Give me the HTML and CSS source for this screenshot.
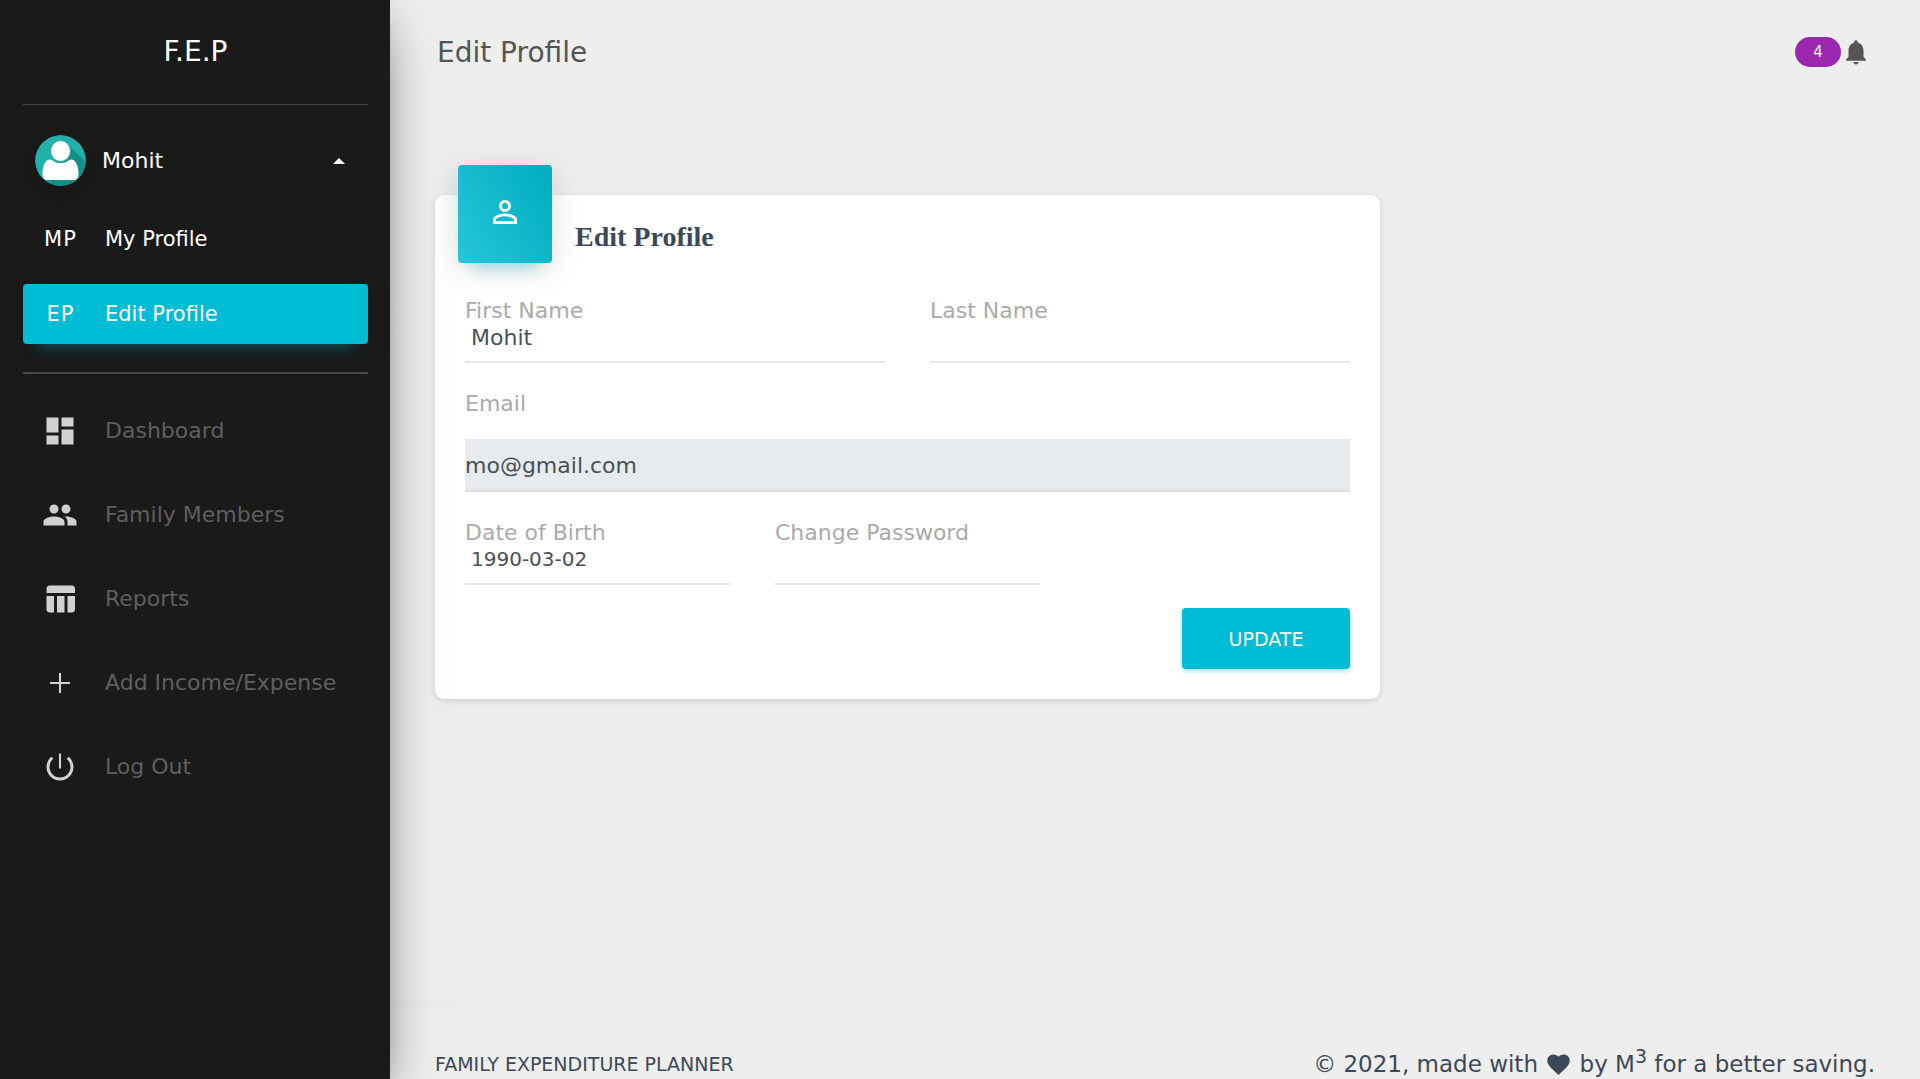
FILE: index.html
```html
<!DOCTYPE html>
<html lang="en">
<head>
<meta charset="utf-8">
<meta name="viewport" content="width=device-width, initial-scale=1">
<title>Edit Profile</title>
<link rel="stylesheet" href="styles.css">
</head>
<body>
<div class="wrapper">
  <aside class="sidebar">
    <a class="logo" href="#">F.E.P</a>
    <div class="user">
      <a class="user-toggle" href="#">
        <svg class="avatar" viewBox="0 0 51 51" aria-hidden="true">
          <defs><clipPath id="disc"><circle cx="25.500" cy="25.500" r="25.500"/></clipPath></defs>
          <g clip-path="url(#disc)">
            <path fill="#20b2aa" d="M0 0h51v51H0z"/>
            <path fill="#158f88" d="M33 9l18 18v24H13l-4-7z"/>
            <path fill="#fff" d="M15 24.500c2.500 0 3.500 3.500 10.500 3.500s8-3.500 10.500-3.500c5 0 7.500 7 7.500 14.500 0 4-2 6-5 6h-26c-3 0-5-2-5-6 0-7.500 2.500-14.500 7.500-14.500z"/>
            <ellipse cx="25.500" cy="16" rx="10" ry="10.500" fill="#fff" stroke="#20a8a0" stroke-width="1"/>
          </g>
        </svg>
        <span>Mohit</span>
        <span class="caret"></span>
      </a>
      <a class="sub-link" href="#"><span class="mini">MP</span><span>My Profile</span></a>
      <a class="sub-link active" href="#"><span class="mini">EP</span><span>Edit Profile</span></a>
    </div>
    <nav class="menu">
      <a href="#"><svg viewBox="0 0 24 24"><path d="M3 13h8V3H3v10zm0 8h8v-6H3v6zm10 0h8V11h-8v10zm0-18v6h8V3h-8z"/></svg>Dashboard</a>
      <a href="#"><svg viewBox="0 0 24 24"><path d="M16 11c1.660 0 2.990-1.340 2.990-3S17.660 5 16 5c-1.660 0-3 1.340-3 3s1.340 3 3 3zm-8 0c1.660 0 2.990-1.340 2.990-3S9.660 5 8 5C6.340 5 5 6.340 5 8s1.340 3 3 3zm0 2c-2.330 0-7 1.170-7 3.500V19h14v-2.500c0-2.330-4.670-3.500-7-3.500zm8 0c-.29 0-.62.02-.97.05 1.160.84 1.970 1.970 1.970 3.450V19h6v-2.500c0-2.330-4.670-3.500-7-3.500z"/></svg>Family Members</a>
      <a href="#"><svg viewBox="0 0 24 24"><path d="M10 10.020h5V21h-5V10.020zM17 21h3c1.100 0 2-.9 2-2v-9h-5v11zm3-18H5c-1.100 0-2 .9-2 2v3h19V5c0-1.100-.9-2-2-2zM3 19c0 1.100.9 2 2 2h3V10H3v9z"/></svg>Reports</a>
      <a href="#"><svg viewBox="0 0 24 24"><path d="M11.300 5.300h1.400v6h6v1.400h-6v6h-1.400v-6h-6v-1.400h6z"/></svg>Add Income/Expense</a>
      <a href="#"><svg viewBox="0 0 24 24"><path d="M12.700 3h-1.400v10h1.400V3zm5.130 2.170l-1.420 1.420C17.990 7.860 19 9.810 19 12c0 3.870-3.130 7-7 7s-7-3.130-7-7c0-2.190 1.010-4.140 2.580-5.420L6.170 5.170C4.230 6.820 3 9.260 3 12c0 4.970 4.030 9 9 9s9-4.030 9-9c0-2.740-1.230-5.180-3.170-6.830z"/></svg>Log Out</a>
    </nav>
  </aside>

  <main class="main">
    <header class="topbar">
      <h1>Edit Profile</h1>
      <a class="alerts" href="#" aria-label="Notifications">
        <span class="badge">4</span>
        <svg viewBox="0 0 24 24"><path d="M12 22c1.100 0 2-.9 2-2h-4c0 1.100.89 2 2 2zm6-6v-5c0-3.070-1.640-5.640-4.500-6.320V4c0-.83-.67-1.500-1.500-1.500s-1.500.67-1.500 1.500v.68C7.630 5.360 6 7.920 6 11v5l-2 2v1h16v-1l-2-2z"/></svg>
      </a>
    </header>

    <div class="content">
      <section class="card">
        <div class="card-head">
          <div class="tile"><svg viewBox="0 0 24 24"><path d="M12 5.900c1.160 0 2.100.94 2.100 2.100s-.94 2.100-2.100 2.100S9.900 9.160 9.900 8s.94-2.100 2.100-2.100m0 9c2.970 0 6.100 1.460 6.100 2.100v1.100H5.900V17c0-.64 3.130-2.100 6.100-2.100M12 4C9.790 4 8 5.790 8 8s1.790 4 4 4 4-1.790 4-4-1.790-4-4-4zm0 9c-2.670 0-8 1.340-8 4v3h16v-3c0-2.660-5.330-4-8-4z"/></svg></div>
          <h2>Edit Profile</h2>
        </div>
        <form class="form">
          <div class="row two">
            <div class="field"><label for="first">First Name</label><input id="first" type="text" value="Mohit"></div>
            <div class="field"><label for="last">Last Name</label><input id="last" type="text"></div>
          </div>
          <div class="row">
            <div class="field filled"><label for="email">Email</label><input id="email" type="email" value="mo@gmail.com" readonly></div>
          </div>
          <div class="row three">
            <div class="field date"><label for="dob">Date of Birth</label><input id="dob" type="text" value="1990-03-02"></div>
            <div class="field"><label for="pass">Change Password</label><input id="pass" type="password"></div>
          </div>
          <button class="update" type="submit">UPDATE</button>
        </form>
      </section>
    </div>

    <footer class="footer">
      <a href="#">FAMILY EXPENDITURE PLANNER</a>
      <p>© 2021, made with <svg viewBox="0 0 24 24" aria-label="love"><path d="M12 21.350l-1.450-1.320C5.400 15.360 2 12.280 2 8.500 2 5.420 4.420 3 7.500 3c1.740 0 3.410.81 4.500 2.090C13.090 3.810 14.760 3 16.500 3 19.580 3 22 5.420 22 8.500c0 3.780-3.400 6.860-8.550 11.540L12 21.350z"/></svg> by M<sup>3</sup> for a better saving.</p>
    </footer>
  </main>
</div>
</body>
</html>
```

FILE: styles.css
```css
* { box-sizing: border-box; }

body {
  margin: 0;
  background: #eee;
  color: #3c4858;
  font-family: "DejaVu Sans", sans-serif;
  font-size: 22px;
}

a { color: inherit; text-decoration: none; }
h1, h2, p { margin: 0; }
svg { fill: currentColor; flex: none; }

.wrapper {
  display: grid;
  grid-template-columns: 390px 1fr;
  min-height: 100vh;
}

/* Sidebar */
.sidebar {
  position: relative;
  z-index: 1;
  padding: 0 22px 0 23px;
  background: #1a1a1a;
  color: #fff;
  box-shadow: 0 24px 57px -18px rgba(0, 0, 0, .56),
              0 6px 38px 0 rgba(0, 0, 0, .12),
              0 12px 15px -8px rgba(0, 0, 0, .2);
}

.logo {
  display: block;
  height: 105px;
  border-bottom: 1px solid #484848;
  line-height: 104px;
  text-align: center;
  font-size: 28px;
}

.user {
  display: flex;
  flex-direction: column;
  gap: 15px;
  padding: 30px 0 28px;
  border-bottom: 2px solid #484848;
}

.user-toggle {
  display: flex;
  align-items: center;
  gap: 16px;
  height: 51px;
  margin-bottom: 8px;
  padding: 0 23px 0 12px;
}

.avatar {
  width: 51px;
  height: 51px;
  border-radius: 50%;
  box-shadow: 0 8px 24px rgba(0, 0, 0, .2);
}

.caret {
  margin-left: auto;
  border: 6px solid transparent;
  border-top: 0;
  border-bottom-color: #fff;
}

.sub-link {
  display: flex;
  align-items: center;
  gap: 22px;
  height: 60px;
  padding-left: 15px;
  border-radius: 4px;
  font-size: 21px;
}

.sub-link.active {
  background: #00bcd4;
  box-shadow: 0 18px 15px -15px rgba(0, 188, 212, .4),
              0 6px 30px rgba(0, 0, 0, .12);
}

.mini {
  width: 45px;
  text-align: center;
  letter-spacing: 1px;
}

.menu {
  display: flex;
  flex-direction: column;
  gap: 15px;
  padding-top: 22px;
  color: #5f5f5f;
}

.menu a {
  display: flex;
  align-items: center;
  gap: 27px;
  height: 69px;
  padding-left: 19px;
}

.menu svg { width: 36px; height: 36px; color: #d1d1d1; }

/* Main column */
.main {
  display: flex;
  flex-direction: column;
  min-width: 0;
}

.topbar {
  display: flex;
  align-items: center;
  justify-content: space-between;
  height: 104px;
  padding: 0 49px 0 47px;
  color: #555;
}

.topbar h1 { font-size: 28px; font-weight: 400; }
.alerts { display: flex; align-items: center; }
.alerts svg { width: 30px; height: 30px; }

.badge {
  width: 46px;
  border-radius: 15px;
  background: #9c27b0;
  color: #fff;
  font-size: 15px;
  line-height: 30px;
  text-align: center;
}

.content {
  flex: 1;
  display: grid;
  grid-template-columns: repeat(12, 1fr);
  column-gap: 45px;
  align-items: start;
  padding: 91px 45px 45px;
}

.card {
  grid-column: span 8;
  border-radius: 9px;
  background: #fff;
  box-shadow: 0 2px 6px rgba(0, 0, 0, .14);
}

.card-head {
  display: flex;
  gap: 23px;
  padding: 0 23px;
}

.card-head h2 {
  padding-top: 27px;
  font: bold 28px/30px "Liberation Serif", serif;
}

.tile {
  display: grid;
  place-items: center;
  width: 94px;
  height: 98px;
  margin-top: -30px;
  padding-bottom: 4px;
  border-radius: 4px;
  background: linear-gradient(60deg, #26c6da, #00acc1);
  color: #fff;
  box-shadow: 0 18px 15px -15px rgba(0, 188, 212, .4),
              0 6px 30px rgba(0, 0, 0, .14);
}

.tile svg { width: 36px; height: 36px; }

.form {
  display: flex;
  flex-direction: column;
  gap: 31px;
  padding: 38px 30px 30px;
}

.row { display: grid; column-gap: 45px; }
.two { grid-template-columns: repeat(2, 1fr); }
.three { grid-template-columns: repeat(3, 1fr); }

.field label {
  display: block;
  color: #aaa;
  line-height: 20px;
}

.field input {
  display: block;
  width: 100%;
  height: 42px;
  padding: 0 6px 8px;
  border: 0;
  border-bottom: 2px solid #e6e6e6;
  border-radius: 0;
  background: transparent;
  color: #495057;
  font: inherit;
}

.field.date input { font-size: 20px; }

.filled input {
  height: 53px;
  margin-top: 25px;
  padding: 2px 0 0;
  border-color: #dcdee0;
  background: #e7ebee;
}

.update {
  align-self: flex-end;
  width: 168px;
  height: 61px;
  margin-top: -8px;
  border: 0;
  border-radius: 4px;
  background: #00bcd4;
  color: #fff;
  font: inherit;
  font-size: 19px;
  box-shadow: 0 3px 4px rgba(0, 188, 212, .3);
}

.footer {
  display: flex;
  align-items: center;
  justify-content: space-between;
  padding: 48px 45px 0;
  border-top: 1px solid #e7e7e7;
  line-height: 29px;
}

.footer a { font-size: 19px; }
.footer p { font-size: 23px; }
.footer svg { width: 27px; height: 27px; vertical-align: -6px; }
.footer sup { font-size: 19px; line-height: 0; }
```
